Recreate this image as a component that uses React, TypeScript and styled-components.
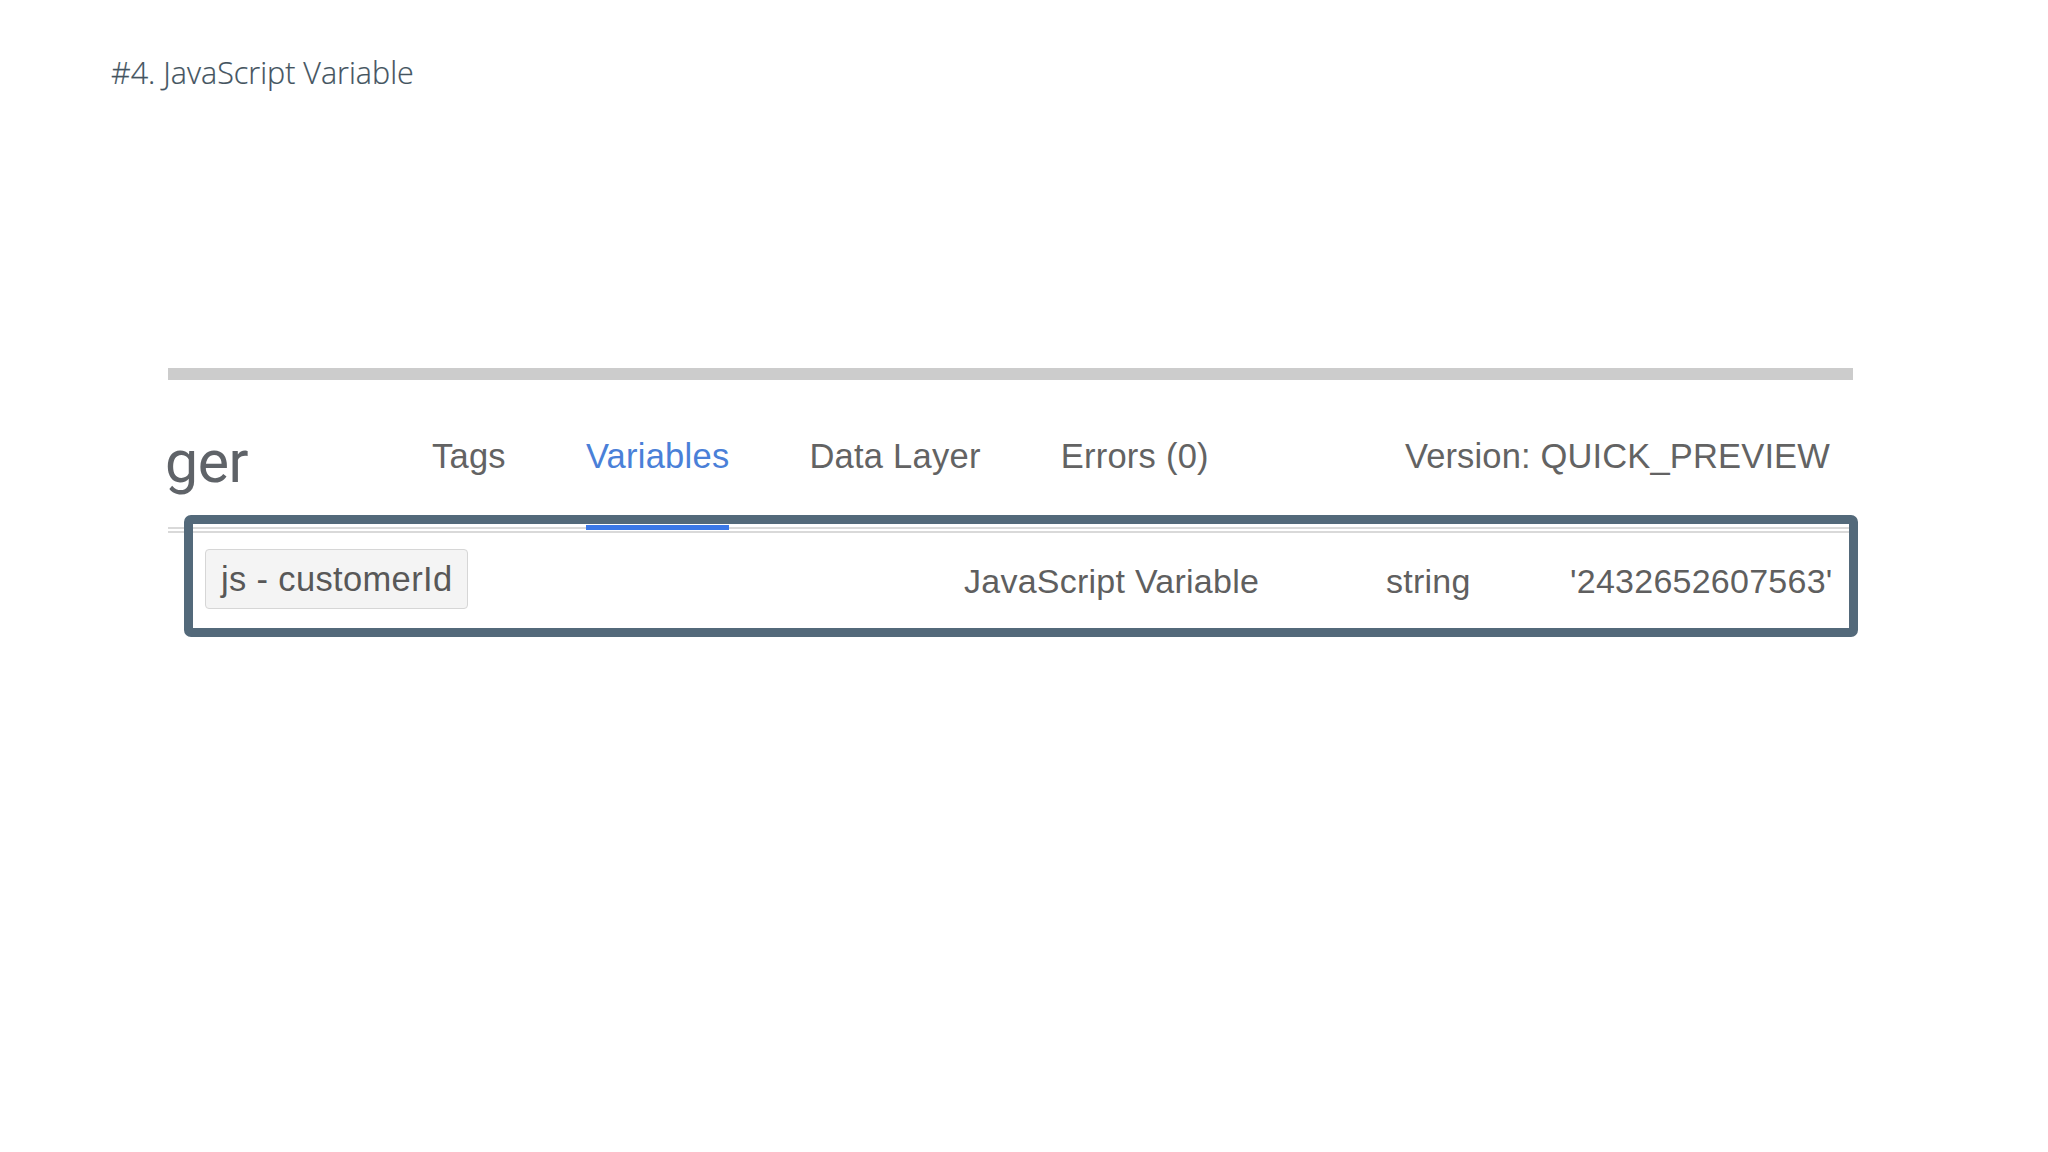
import React from "react";
import styled, {createGlobalStyle} from "styled-components";

const GlobalStyle = createGlobalStyle`
  html, body {
    margin: 0;
    padding: 0;
    background: #ffffff;
  }
  body {
    font-family: "Liberation Sans", Arial, sans-serif;
  }
`;

const Slide = styled.div`
  width: 2048px;
  height: 1152px;
  box-sizing: border-box;
  padding: 52px 0 0 111px;
  background: #ffffff;
`;

const Title = styled.h1`
  margin: 0;
  font-family: "Open Sans", sans-serif;
  font-weight: 300;
  font-size: 30.5px;
  line-height: 40px;
  color: #44545f;
  -webkit-text-stroke: 0.2px #44545f;
`;

const Panel = styled.div`
  position: relative;
  width: 1685px;
  margin: 276px 0 0 57px;
`;

const TopBar = styled.div`
  height: 12px;
  background: #cccccc;
`;

const Header = styled.div`
  display: flex;
  align-items: stretch;
  height: 153px;
  box-sizing: border-box;
  padding: 56px 23px 0 0;
  border-bottom: 6px double #d9d9d9;
`;

const Logo = styled.div`
  width: 267px;
  margin: -2px 0 0 -3px;
  font-family: Roboto, sans-serif;
  font-size: 59px;
  line-height: 56px;
  color: #5f6368;
  letter-spacing: -0.5px;
`;

const Tabs = styled.div`
  display: flex;
  gap: 80px;
`;

const Tab = styled.div<{ $active?: boolean }>`
  position: relative;
  font-size: 34.5px;
  line-height: 40px;
  letter-spacing: 0.25px;
  color: ${p => (p.$active ? "#4a80d8" : "#636363")};

  &::after {
    content: "";
    display: ${p => (p.$active ? "block" : "none")};
    position: absolute;
    left: 0;
    right: 0;
    bottom: -3px;
    height: 5px;
    background: #3b78e7;
    z-index: 2;
  }
`;

const Version = styled.div`
  margin-left: auto;
  font-size: 34.5px;
  line-height: 40px;
  letter-spacing: 0.15px;
  color: #636363;
`;

const Row = styled.div`
  display: grid;
  grid-template-columns: 759px 422px 184px auto;
  align-items: center;
  padding: 16px 0 18px 37px;
  font-size: 34px;
  letter-spacing: 0.25px;
  color: #5f5f5f;
`;

const Chip = styled.div`
  justify-self: start;
  height: 60px;
  box-sizing: border-box;
  padding: 0 15px;
  display: flex;
  align-items: center;
  border: 1px solid #d6d6d6;
  border-radius: 4px;
  background: #f4f4f4;
  font-size: 34.5px;
  line-height: 40px;
  letter-spacing: 0.35px;
  color: #585858;
`;

const Cell = styled.div`
  line-height: 40px;
  padding-top: 4px;
`;

const Highlight = styled.div`
  position: absolute;
  left: 16px;
  top: 147px;
  width: 1674px;
  height: 122px;
  box-sizing: border-box;
  border: 9px solid #53697a;
  border-radius: 7px;
  pointer-events: none;
  z-index: 3;
`;

export default function App() {
  return (
    <>
      <GlobalStyle/>
      <Slide>
        <Title>#4. JavaScript Variable</Title>
        <Panel>
          <TopBar/>
          <Header>
            <Logo>ger</Logo>
            <Tabs>
              <Tab>Tags</Tab>
              <Tab $active>Variables</Tab>
              <Tab>Data Layer</Tab>
              <Tab>Errors (0)</Tab>
            </Tabs>
            <Version>Version: QUICK_PREVIEW</Version>
          </Header>
          <Row>
            <Chip>js - customerId</Chip>
            <Cell>JavaScript Variable</Cell>
            <Cell>string</Cell>
            <Cell>'2432652607563'</Cell>
          </Row>
          <Highlight/>
        </Panel>
      </Slide>
    </>
  );
}
